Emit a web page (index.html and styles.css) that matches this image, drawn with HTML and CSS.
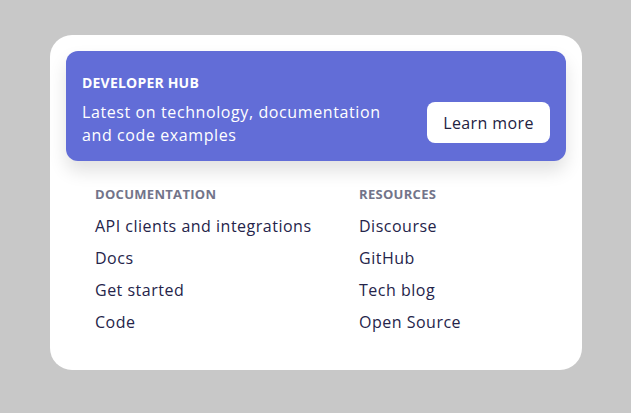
FILE: index.html
```html
<!DOCTYPE html>
<html>
<head>
<meta charset="utf-8">
<link rel="stylesheet" href="styles.css">
</head>
<body>
<div class="card">
  <div class="banner">
    <div class="banner-text">
      <div class="banner-title">DEVELOPER HUB</div>
      <div class="banner-desc">Latest on technology, documentation and code examples</div>
    </div>
    <a class="btn">Learn more</a>
  </div>
  <div class="cols">
    <div class="col">
      <div class="col-title">DOCUMENTATION</div>
      <a class="link">API clients and integrations</a>
      <a class="link">Docs</a>
      <a class="link">Get started</a>
      <a class="link">Code</a>
    </div>
    <div class="col">
      <div class="col-title">RESOURCES</div>
      <a class="link">Discourse</a>
      <a class="link">GitHub</a>
      <a class="link">Tech blog</a>
      <a class="link">Open Source</a>
    </div>
  </div>
</div>
</body>
</html>
```

FILE: styles.css
```css
html, body { margin: 0; padding: 0; }
body {
  background: #c8c8c8;
  font-family: "Open Sans", "DejaVu Sans", sans-serif;
  width: 631px;
  height: 413px;
  padding: 35px 0 0 50px;
  box-sizing: border-box;
}
.card {
  width: 532px;
  height: 335px;
  box-sizing: border-box;
  background: #fff;
  border-radius: 22px;
  padding: 16px;
}
.banner {
  height: 110px;
  box-sizing: border-box;
  background: #626dd7;
  border-radius: 12px;
  box-shadow: 0 10px 18px rgba(0,0,0,0.12);
  display: flex;
  align-items: flex-start;
  justify-content: space-between;
  padding: 22px 16px 0;
  color: #fff;
}
.banner-text { width: 330px; }
.banner-title {
  font-weight: 700;
  font-size: 14px;
  line-height: 20px;
  margin-bottom: 8px;
  letter-spacing: 0.2px;
}
.banner-desc {
  font-size: 16px;
  line-height: 22.5px;
  letter-spacing: 0.6px;
}
.btn {
  display: flex;
  align-items: center;
  justify-content: center;
  width: 123px;
  height: 41px;
  margin-top: 29px;
  background: #fff;
  border-radius: 8px;
  color: #23223f;
  font-size: 16px;
  letter-spacing: 0.4px;
}
.cols {
  display: grid;
  grid-template-columns: 264px 1fr;
  padding: 23px 29px 0;
}
.col { display: flex; flex-direction: column; }
.col-title {
  font-size: 13px;
  font-weight: 700;
  color: #72748a;
  line-height: 20px;
  margin-bottom: 6px;
  letter-spacing: 0.3px;
}
.link {
  font-size: 16px;
  line-height: 32px;
  color: #25244a;
  letter-spacing: 0.5px;
}
```
